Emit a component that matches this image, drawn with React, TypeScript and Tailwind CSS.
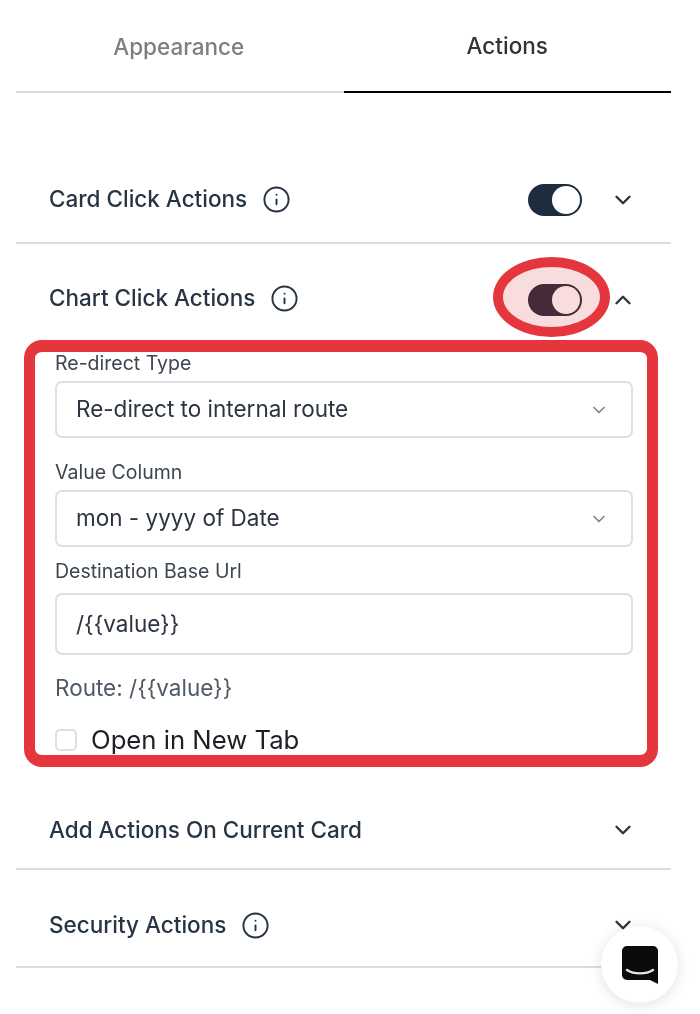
import { ChevronDown, ChevronUp, Info } from "lucide-react";

function Toggle({ tint }: { tint?: boolean }) {
  return (
    <div
      className={`flex h-[32px] w-[54px] items-center justify-end rounded-full pr-[2px] ${tint ? "bg-[#46323f]" : "bg-[#1e2d3d]"}`}
    >
      <div className="h-[28px] w-[28px] rounded-full bg-white" />
    </div>
  );
}

function Title({ text, info }: { text: string; info?: boolean }) {
  return (
    <div className="flex items-center gap-[15px]">
      <span className="text-[22.5px] font-medium leading-none text-[#263443]">{text}</span>
      {info && <Info size={29} strokeWidth={1.6} className="text-[#263443]" />}
    </div>
  );
}

function Chevron({ up }: { up?: boolean }) {
  const Icon = up ? ChevronUp : ChevronDown;
  return <Icon size={26} strokeWidth={2.2} className="text-[#263443]" />;
}

function Label({ text }: { text: string }) {
  return <div className="h-[20px] text-[19.5px] leading-[20px] text-[#3d4650]">{text}</div>;
}

function Field({ value, tall }: { value: string; tall?: boolean }) {
  return (
    <div
      className={`flex items-center justify-between rounded-[7px] border-2 border-[#dcdfe3] pl-[19px] pr-[22px] text-[22.5px] leading-none text-[#2b3440] ${tall ? "h-[62px]" : "h-[57px]"}`}
    >
      <span>{value}</span>
      {!tall && <ChevronDown size={20} strokeWidth={2} className="text-[#7b8491]" />}
    </div>
  );
}

export default function App() {
  return (
    <div className="relative h-[1014px] w-[700px] overflow-hidden bg-white pl-[16px] pr-[29px] font-['Inter',sans-serif]">
      <div className="grid h-[93px] grid-cols-2 border-b-2 border-[#d9d9d9] text-[22.5px] font-medium">
        <div className="-mb-[2px] flex items-center justify-center pr-[2px] text-[#7a7f85]">Appearance</div>
        <div className="-mb-[2px] flex items-center justify-center border-b-2 border-black text-[#2f3338]">Actions</div>
      </div>

      <div className="mt-[64px] flex h-[87px] items-center justify-between border-b-2 border-[#dcdcdc] pb-[1px] pl-[33px] pr-[35px]">
        <Title text="Card Click Actions" info />
        <div className="flex items-center gap-[28px] pt-[1px]">
          <Toggle />
          <Chevron />
        </div>
      </div>

      <div className="flex h-[96px] items-center justify-between pl-[33px] pr-[35px] pt-[12px]">
        <Title text="Chart Click Actions" info />
        <div className="flex items-center gap-[28px] pt-[3px]">
          <Toggle tint />
          <Chevron up />
        </div>
      </div>

      <div className="ml-[8px] mr-[13px] flex h-[427px] flex-col overflow-hidden rounded-[18px] border-x-[11px] border-y-[12px] border-[#e4363c] pl-[20px] pr-[14px] pt-[1px]">
        <Label text="Re-direct Type" />
        <div className="mt-[8px]">
          <Field value="Re-direct to internal route" />
        </div>
        <div className="mt-[24px]">
          <Label text="Value Column" />
        </div>
        <div className="mt-[8px]">
          <Field value="mon - yyyy of Date" />
        </div>
        <div className="mt-[14px]">
          <Label text="Destination Base Url" />
        </div>
        <div className="mt-[12px]">
          <Field value="/{{value}}" tall />
        </div>
        <div className="mt-[21px] h-[23px] text-[22.5px] leading-[23px] text-[#4f5964]">Route: /{"{{value}}"}</div>
        <div className="mt-[28px] flex items-center gap-[14px]">
          <div className="h-[22px] w-[22px] rounded-[5px] border-2 border-[#dcdfe3]" />
          <span className="text-[25.7px] leading-none text-[#1c1f24]">Open in New Tab</span>
        </div>
      </div>

      <div className="mt-[11px] flex h-[92px] items-center justify-between border-b-2 border-[#dcdcdc] pl-[33px] pr-[35px] pt-[14px]">
        <Title text="Add Actions On Current Card" />
        <Chevron />
      </div>

      <div className="flex h-[98px] items-center justify-between border-b-2 border-[#dcdcdc] pl-[33px] pr-[35px] pt-[14px]">
        <Title text="Security Actions" info />
        <Chevron />
      </div>

      {/* Annotation ellipse around the toggle */}
      <div className="absolute left-[493px] top-[257px] h-[80px] w-[117px] rounded-[50%] border-[10px] border-[#e4363c] bg-[#f9dcdd] mix-blend-multiply" />

      {/* Chat launcher */}
      <div className="absolute left-[601px] top-[926px] flex h-[77px] w-[77px] items-center justify-center rounded-full bg-white shadow-[0_2px_14px_rgba(0,0,0,0.12)]">
        <svg width="36" height="38" viewBox="0 0 36 38">
          <path d="M5 0h26a5 5 0 0 1 5 5v33l-8-4H5a5 5 0 0 1-5-5V5a5 5 0 0 1 5-5z" fill="#0b0b0c" />
          <path d="M5 24c7 4.500 19 4.500 26 0" fill="none" stroke="#e8e8e8" strokeWidth="2.4" strokeLinecap="round" />
        </svg>
      </div>
    </div>
  );
}
